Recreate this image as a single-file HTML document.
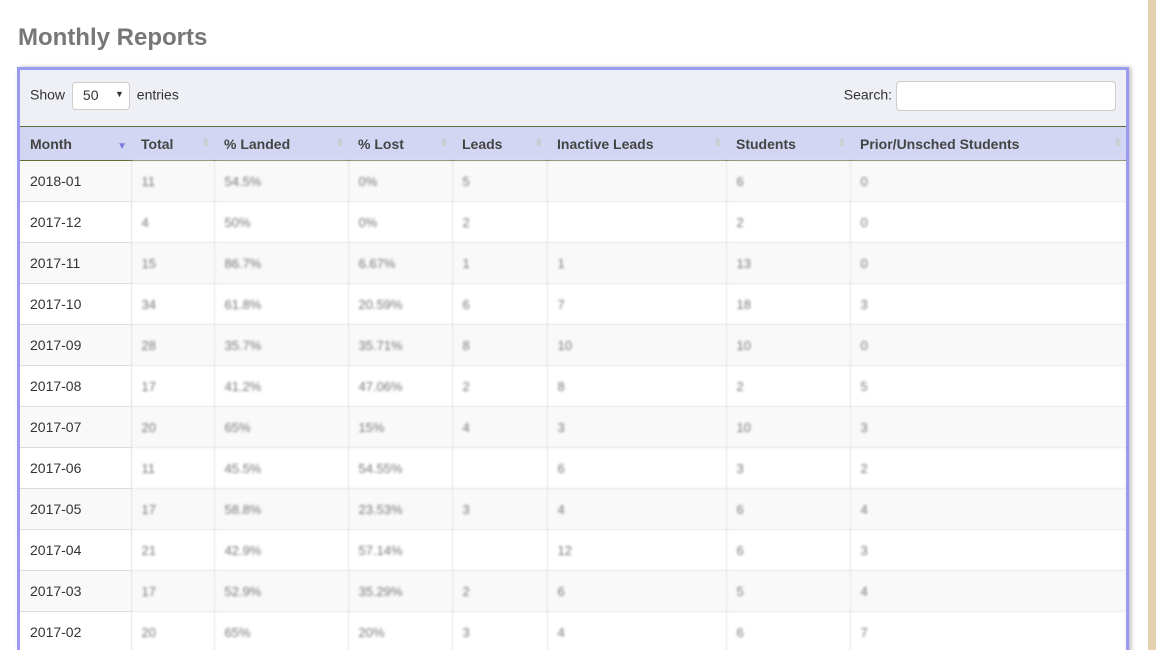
<!DOCTYPE html>
<html style="overflow:hidden;height:650px"><head><style>
body{margin:0;width:1156px;height:650px;overflow:hidden;background:#fff;font-family:"Liberation Sans",sans-serif;position:relative}
.side{position:absolute;left:1148px;top:0;width:8px;height:650px;background:#e6d2b0}
h1{position:absolute;left:18px;top:24px;margin:0;font-size:24px;color:#777;font-weight:bold}
.box{position:absolute;left:17px;top:67px;width:1106px;height:590px;border:3px solid #9a9af0;border-bottom:none;background:#eef0f6;box-shadow:2px 0 4px #bbb;overflow:hidden}
.top{height:56px;position:relative;font-size:14px;color:#333}
.show{position:absolute;left:10px;top:12px}
.sel{display:inline-block;width:58px;height:28px;border:1px solid #ccc;border-radius:4px;background:#fff;vertical-align:middle;position:relative;margin:0 3px;box-sizing:border-box}
.sel span{position:absolute;left:10px;top:4px;font-size:14px}
.sel i{position:absolute;right:5px;top:6px;font-style:normal;font-size:9px}
.search{position:absolute;right:10px;top:11px}
.search .in{display:inline-block;width:218px;height:28px;border:1px solid #ccc;border-radius:4px;background:#fff;vertical-align:middle;margin-left:4px}
table{border-collapse:collapse;width:1106px;font-size:14px;color:#333;table-layout:fixed}
th{background:#d3d6f3;height:33px;text-align:left;padding:0 10px;border-top:1px solid #5a6e35;border-bottom:1px solid #5a6e35;position:relative;color:#444}
th .s{position:absolute;right:4px;top:11px;color:#ccc;font-size:10px}
td{height:40px;padding:0 10px;border-bottom:1px solid #ddd;border-left:1px solid #ddd;background:#fff}
td:first-child{border-left:none}
tr:nth-child(odd) td{background:#f9f9f9}
td.b{color:#777;filter:blur(1.4px);font-size:13px}
</style></head><body>
<div class="side"></div>
<h1>Monthly Reports</h1>
<div class="box">
<div class="top">
<div class="show">Show <span class="sel"><span>50</span><i>▼</i></span> entries</div>
<div class="search">Search:<span class="in"></span></div>
</div>
<table>
<colgroup><col style="width:111px"><col style="width:83px"><col style="width:134px"><col style="width:104px"><col style="width:95px"><col style="width:179px"><col style="width:124px"><col></colgroup>
<thead><tr><th>Month<span class="s" style="color:#7b7be0;top:14px">▼</span></th><th>Total<span class="s">⬍</span></th><th>% Landed<span class="s">⬍</span></th><th>% Lost<span class="s">⬍</span></th><th>Leads<span class="s">⬍</span></th><th>Inactive Leads<span class="s">⬍</span></th><th>Students<span class="s">⬍</span></th><th>Prior/Unsched Students<span class="s">⬍</span></th></tr></thead>
<tbody>
<tr><td>2018-01</td><td class="b">11</td><td class="b">54.5%</td><td class="b">0%</td><td class="b">5</td><td class="b"></td><td class="b">6</td><td class="b">0</td></tr>
<tr><td>2017-12</td><td class="b">4</td><td class="b">50%</td><td class="b">0%</td><td class="b">2</td><td class="b"></td><td class="b">2</td><td class="b">0</td></tr>
<tr><td>2017-11</td><td class="b">15</td><td class="b">86.7%</td><td class="b">6.67%</td><td class="b">1</td><td class="b">1</td><td class="b">13</td><td class="b">0</td></tr>
<tr><td>2017-10</td><td class="b">34</td><td class="b">61.8%</td><td class="b">20.59%</td><td class="b">6</td><td class="b">7</td><td class="b">18</td><td class="b">3</td></tr>
<tr><td>2017-09</td><td class="b">28</td><td class="b">35.7%</td><td class="b">35.71%</td><td class="b">8</td><td class="b">10</td><td class="b">10</td><td class="b">0</td></tr>
<tr><td>2017-08</td><td class="b">17</td><td class="b">41.2%</td><td class="b">47.06%</td><td class="b">2</td><td class="b">8</td><td class="b">2</td><td class="b">5</td></tr>
<tr><td>2017-07</td><td class="b">20</td><td class="b">65%</td><td class="b">15%</td><td class="b">4</td><td class="b">3</td><td class="b">10</td><td class="b">3</td></tr>
<tr><td>2017-06</td><td class="b">11</td><td class="b">45.5%</td><td class="b">54.55%</td><td class="b"></td><td class="b">6</td><td class="b">3</td><td class="b">2</td></tr>
<tr><td>2017-05</td><td class="b">17</td><td class="b">58.8%</td><td class="b">23.53%</td><td class="b">3</td><td class="b">4</td><td class="b">6</td><td class="b">4</td></tr>
<tr><td>2017-04</td><td class="b">21</td><td class="b">42.9%</td><td class="b">57.14%</td><td class="b"></td><td class="b">12</td><td class="b">6</td><td class="b">3</td></tr>
<tr><td>2017-03</td><td class="b">17</td><td class="b">52.9%</td><td class="b">35.29%</td><td class="b">2</td><td class="b">6</td><td class="b">5</td><td class="b">4</td></tr>
<tr><td>2017-02</td><td class="b">20</td><td class="b">65%</td><td class="b">20%</td><td class="b">3</td><td class="b">4</td><td class="b">6</td><td class="b">7</td></tr>
</tbody></table>
</div>
</body></html>
